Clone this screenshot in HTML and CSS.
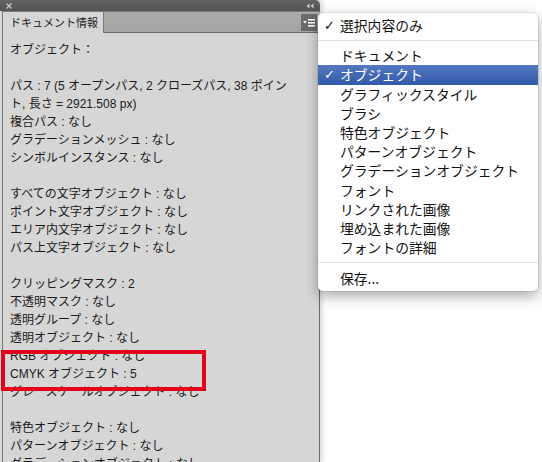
FILE: index.html
```html
<!DOCTYPE html>
<html lang="ja">
<head>
<meta charset="utf-8">
<title>ドキュメント情報</title>
<link rel="stylesheet" href="styles.css">
</head>
<body>
<div class="panel">
  <div class="titlebar">
    <svg class="close" width="6" height="6" viewBox="0 0 6 6"><path d="M0.5 0.5 L5.5 5.5 M5.5 0.5 L0.5 5.5" stroke="#c9c9c9" stroke-width="1.3"/></svg>
    <svg class="collapse" width="8" height="6" viewBox="0 0 8 6"><path d="M3.5 0.5 L0.5 3 L3.5 5.5 Z M7.5 0.5 L4.5 3 L7.5 5.5 Z" fill="#c9c9c9"/></svg>
  </div>
  <div class="tabrow">
    <div class="tab">ドキュメント情報</div>
    <div class="filler">
      <div class="menubtn">
        <svg width="16" height="17" viewBox="0 0 16 17"><path d="M2 7 L6 7 L4 9.5 Z" fill="#fff"/><rect x="7" y="5" width="7" height="1.6" fill="#fff"/><rect x="7" y="8" width="7" height="1.6" fill="#fff"/><rect x="7" y="11" width="7" height="1.6" fill="#fff"/></svg>
      </div>
    </div>
  </div>
  <div class="content">
    <div class="group"><div class="line">オブジェクト：</div></div>
    <div class="group">
      <div class="line">パス : 7 (5 オープンパス, 2 クローズパス, 38 ポイン</div>
      <div class="line">ト, 長さ = 2921.508 px)</div>
      <div class="line">複合パス : なし</div>
      <div class="line">グラデーションメッシュ : なし</div>
      <div class="line">シンボルインスタンス : なし</div>
    </div>
    <div class="group">
      <div class="line">すべての文字オブジェクト : なし</div>
      <div class="line">ポイント文字オブジェクト : なし</div>
      <div class="line">エリア内文字オブジェクト : なし</div>
      <div class="line">パス上文字オブジェクト : なし</div>
    </div>
    <div class="group">
      <div class="line">クリッピングマスク : 2</div>
      <div class="line">不透明マスク : なし</div>
      <div class="line">透明グループ : なし</div>
      <div class="line">透明オブジェクト : なし</div>
      <div class="line">RGB オブジェクト : なし</div>
      <div class="line">CMYK オブジェクト : 5</div>
      <div class="line">グレースケールオブジェクト : なし</div>
    </div>
    <div class="group">
      <div class="line">特色オブジェクト : なし</div>
      <div class="line">パターンオブジェクト : なし</div>
      <div class="line">グラデーションオブジェクト : なし</div>
    </div>
  </div>
  <div class="highlight-box"></div>
</div>

<div class="menu">
  <div class="item"><span class="check">✓</span>選択内容のみ</div>
  <div class="sep"></div>
  <div class="item"><span class="check"></span>ドキュメント</div>
  <div class="item selected"><span class="check">✓</span>オブジェクト</div>
  <div class="item"><span class="check"></span>グラフィックスタイル</div>
  <div class="item"><span class="check"></span>ブラシ</div>
  <div class="item"><span class="check"></span>特色オブジェクト</div>
  <div class="item"><span class="check"></span>パターンオブジェクト</div>
  <div class="item"><span class="check"></span>グラデーションオブジェクト</div>
  <div class="item"><span class="check"></span>フォント</div>
  <div class="item"><span class="check"></span>リンクされた画像</div>
  <div class="item"><span class="check"></span>埋め込まれた画像</div>
  <div class="item"><span class="check"></span>フォントの詳細</div>
  <div class="sep sep2"></div>
  <div class="item"><span class="check"></span>保存...</div>
</div>
</body>
</html>
```

FILE: styles.css
```css
html, body {
  margin: 0;
  padding: 0;
  background: #ffffff;
  width: 542px;
  height: 462px;
  overflow: hidden;
  font-family: "Liberation Sans", "Noto Sans CJK JP", sans-serif;
}

.panel {
  position: relative;
  width: 320px;
  height: 462px;
  display: flex;
  flex-direction: column;
  background: #d6d6d6;
  box-shadow: 2px 0 5px rgba(0, 0, 0, 0.18);
}

.titlebar {
  height: 11px;
  flex: none;
  background: linear-gradient(#626262, #545454);
  border-top-right-radius: 5px;
  display: flex;
  align-items: center;
  justify-content: space-between;
  padding: 0 6px 0 6px;
}

.tabrow {
  height: 22px;
  flex: none;
  display: flex;
  background: #d6d6d6;
  padding-left: 2px;
}

.tab {
  width: 102px;
  height: 22px;
  box-sizing: border-box;
  background: #d6d6d6;
  border-left: 1px solid #7a7a7a;
  border-right: 1px solid #7a7a7a;
  border-top: 1px solid #7d7d7d;
  padding-left: 7px;
  font-family: "Noto Sans CJK JP", sans-serif;
  font-size: 11px;
  line-height: 20px;
  white-space: nowrap;
  overflow: hidden;
  color: #1a1a1a;
}

.filler {
  flex: 1;
  height: 22px;
  box-sizing: border-box;
  background: linear-gradient(#aaaaaa, #a4a4a4);
  border-top: 1px solid #7d7d7d;
  border-bottom: 1px solid #6a6a6a;
  display: flex;
  align-items: center;
  justify-content: flex-end;
  padding-right: 3px;
}

.menubtn {
  width: 16px;
  height: 17px;
  background: #6b6b6b;
  display: flex;
}

.content {
  flex: 1;
  overflow: hidden;
  margin-left: 2px;
  border-left: 1px solid #777777;
  border-right: 1px solid #6a6a6a;
  padding: 8px 0 0 7px;
  font-size: 12px;
  color: #1a1a1a;
}

.group {
  margin-bottom: 18px;
}

.line {
  height: 18px;
  line-height: 18px;
  white-space: nowrap;
}

.highlight-box {
  position: absolute;
  left: 1px;
  top: 350px;
  width: 205px;
  height: 41px;
  box-sizing: border-box;
  border: 4px solid #e3001b;
}

.menu {
  position: absolute;
  left: 318px;
  top: 13px;
  width: 220px;
  padding: 3px 0;
  background: #ffffff;
  border-radius: 5px;
  box-shadow: 0 5px 14px rgba(0, 0, 0, 0.35), 0 0 0 1px rgba(0, 0, 0, 0.07);
  font-family: "Noto Sans CJK JP", sans-serif;
  font-size: 13.8px;
  color: #111111;
}

.item {
  height: 19.2px;
  line-height: 19.2px;
  display: flex;
  white-space: nowrap;
}

.check {
  width: 16px;
  margin-left: 6px;
  font-family: "DejaVu Sans", sans-serif;
  font-size: 13px;
}

.item.selected {
  background: linear-gradient(#5479c0, #3259a9);
  color: #ffffff;
}

.sep {
  height: 1px;
  background: #e2e2e2;
  margin: 5px 0;
}

.sep2 {
  margin: 5px 0 6px;
}
```
